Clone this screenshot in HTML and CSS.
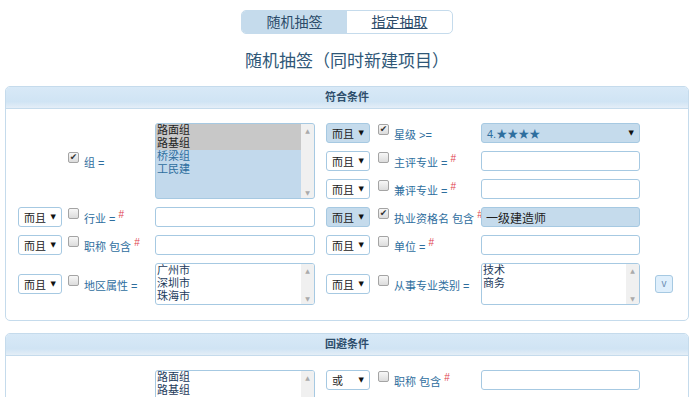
FILE: index.html
```html
<!DOCTYPE html>
<html lang="zh-CN">
<head>
    <meta charset="UTF-8">
    <title>随机抽签（同时新建项目）</title>
    <link rel="stylesheet" href="styles.css">
</head>
<body>
    <div class="tabs">
        <a class="tab active">随机抽签</a>
        <a class="tab link">指定抽取</a>
    </div>
    <h1 class="title">随机抽签（同时新建项目）</h1>

    <!-- 符合条件 -->
    <div class="panel">
        <div class="panel-head">符合条件</div>
        <div class="cond">
            <label class="chk c2 span3"><span class="cb on"></span><span class="lbl">组 =</span></label>
            <div class="listbox c3 span3 on">
                <div class="opts">
                    <div class="opt sel">路面组</div>
                    <div class="opt sel">路基组</div>
                    <div class="opt">桥梁组</div>
                    <div class="opt">工民建</div>
                </div>
                <div class="sbar"><span>▲</span><span>▼</span></div>
            </div>
            <div class="dd c4 on">而且</div>
            <label class="chk c5"><span class="cb on"></span><span class="lbl">星级 &gt;=</span></label>
            <div class="dd wide c6 on"><span class="stars">4.★★★★</span></div>

            <div class="dd c4">而且</div>
            <label class="chk c5"><span class="cb"></span><span class="lbl">主评专业 = <sup class="req">#</sup></span></label>
            <input class="txt c6" type="text">

            <div class="dd c4">而且</div>
            <label class="chk c5"><span class="cb"></span><span class="lbl">兼评专业 = <sup class="req">#</sup></span></label>
            <input class="txt c6" type="text">

            <div class="dd c1">而且</div>
            <label class="chk c2"><span class="cb"></span><span class="lbl">行业 = <sup class="req">#</sup></span></label>
            <input class="txt c3" type="text">
            <div class="dd c4 on">而且</div>
            <label class="chk c5"><span class="cb on"></span><span class="lbl">执业资格名 包含 <sup class="req">#</sup></span></label>
            <input class="txt c6 on" type="text" value="一级建造师">

            <div class="dd c1">而且</div>
            <label class="chk c2"><span class="cb"></span><span class="lbl">职称 包含 <sup class="req">#</sup></span></label>
            <input class="txt c3" type="text">
            <div class="dd c4">而且</div>
            <label class="chk c5"><span class="cb"></span><span class="lbl">单位 = <sup class="req">#</sup></span></label>
            <input class="txt c6" type="text">

            <div class="dd c1">而且</div>
            <label class="chk c2"><span class="cb"></span><span class="lbl">地区属性 =</span></label>
            <div class="listbox short c3">
                <div class="opts">
                    <div class="opt">广州市</div>
                    <div class="opt">深圳市</div>
                    <div class="opt">珠海市</div>
                </div>
                <div class="sbar"><span>▲</span><span>▼</span></div>
            </div>
            <div class="dd c4">而且</div>
            <label class="chk c5"><span class="cb"></span><span class="lbl">从事专业类别 =</span></label>
            <div class="listbox short c6">
                <div class="opts">
                    <div class="opt">技术</div>
                    <div class="opt">商务</div>
                </div>
                <div class="sbar"><span>▲</span><span>▼</span></div>
            </div>
            <button class="more c7" type="button">v</button>
        </div>
    </div>

    <!-- 回避条件 -->
    <div class="panel">
        <div class="panel-head">回避条件</div>
        <div class="cond">
            <label class="chk c2 span3"><span class="cb"></span><span class="lbl">组 =</span></label>
            <div class="listbox c3 span3">
                <div class="opts">
                    <div class="opt">路面组</div>
                    <div class="opt">路基组</div>
                    <div class="opt">桥梁组</div>
                    <div class="opt">工民建</div>
                </div>
                <div class="sbar"><span>▲</span><span>▼</span></div>
            </div>
            <div class="dd c4">或</div>
            <label class="chk c5"><span class="cb"></span><span class="lbl">职称 包含 <sup class="req">#</sup></span></label>
            <input class="txt c6" type="text">

            <div class="dd c4">或</div>
            <label class="chk c5"><span class="cb"></span><span class="lbl">单位 = <sup class="req">#</sup></span></label>
            <input class="txt c6" type="text">

            <div class="dd c4">或</div>
            <label class="chk c5"><span class="cb"></span><span class="lbl">执业资格名 包含 <sup class="req">#</sup></span></label>
            <input class="txt c6" type="text">
        </div>
    </div>
</body>
</html>
```

FILE: styles.css
```css
* {
    margin: 0;
    padding: 0;
    box-sizing: border-box;
}

body {
    font-family: "Liberation Sans", "Noto Sans CJK SC", sans-serif;
    font-size: 11px;
    color: #222;
    background: #fff;
    padding: 10px 6px 0 5px;
}

/* tabs */
.tabs {
    display: flex;
    width: 212px;
    margin: 0 auto;
    border: 1px solid #c5dbec;
    border-radius: 5px;
    overflow: hidden;
}

.tab {
    flex: 1;
    height: 22px;
    line-height: 22px;
    text-align: center;
    font-size: 14px;
    color: #2b4b69;
    cursor: pointer;
}

.tab.active {
    background: #c5dbec;
}

.tab.link {
    text-decoration: underline;
}

.title {
    font-size: 17px;
    font-weight: normal;
    line-height: 24px;
    text-align: center;
    color: #2f5777;
    margin: 16px 0 12px;
}

/* panels */
.panel {
    border: 1px solid #c5dbec;
    border-radius: 5px;
    margin-bottom: 12px;
}

.panel-head {
    height: 22px;
    line-height: 21px;
    text-align: center;
    font-weight: bold;
    font-size: 11px;
    color: #2e4e6c;
    background: linear-gradient(#d8e9f7, #d0e4f4 70%, #e4eef7);
    border-bottom: 1px solid #c5dbec;
    border-radius: 4px 4px 0 0;
}

.cond {
    display: grid;
    grid-template-columns: 48px 89px 171px 50px 105px 174px 18px;
    row-gap: 8px;
    align-items: center;
    padding: 14px 12px 15px;
}

.c1 { grid-column: 1; }
.c2 { grid-column: 2; }
.c3 { grid-column: 3; }
.c4 { grid-column: 4; }
.c5 { grid-column: 5; }
.c6 { grid-column: 6; }
.c7 { grid-column: 7; }

.span3 {
    grid-row: span 3;
}

/* dropdowns */
.dd {
    display: flex;
    align-items: center;
    width: 44px;
    height: 20px;
    padding: 0 5px 0 5px;
    border: 1px solid #a6c9e2;
    border-radius: 3px;
    background: #fff;
    font-size: 11px;
    color: #222;
}

.dd::after {
    content: "▼";
    margin-left: auto;
    font-family: "DejaVu Sans", sans-serif;
    font-size: 7px;
    color: #111;
}

.dd.on {
    background: #c5dbec;
}

.dd.wide {
    width: 159px;
}

.stars {
    color: #2e6e9e;
    font-size: 11px;
}

/* checkbox + label */
.chk {
    display: flex;
    align-items: flex-start;
    gap: 5px;
    height: 20px;
    padding-left: 2px;
    color: #2e6e9e;
    white-space: nowrap;
}

.chk.span3 {
    align-self: center;
}

.cb {
    flex: none;
    width: 11px;
    height: 11px;
    margin-top: 1px;
    border: 1px solid #a4a4a4;
    border-radius: 2px;
    background: linear-gradient(#f7f7f7, #dcdcdc);
    font-size: 9px;
    line-height: 9px;
    text-align: center;
    color: #333;
}

.cb.on::after {
    content: "✔";
    font-family: "DejaVu Sans", sans-serif;
}

.lbl {
    margin-top: 5px;
    line-height: 14px;
}

.req {
    color: #e04450;
    font-size: 10px;
    vertical-align: 5px;
    line-height: 0;
}

/* text inputs */
.txt {
    width: 160px;
    height: 20px;
    padding: 0 4px;
    border: 1px solid #a6c9e2;
    border-radius: 3px;
    background: #fff;
    font-family: inherit;
    font-size: 12px;
    color: #222;
}

.txt.c6 {
    width: 159px;
}

.txt.on {
    background: #c5dbec;
}

/* list boxes */
.listbox {
    display: flex;
    width: 160px;
    border: 1px solid #a6c9e2;
    border-radius: 3px;
    background: #fff;
    overflow: hidden;
    align-self: stretch;
}

.listbox.c6 {
    width: 159px;
}

.listbox.short {
    height: 42px;
    align-self: center;
}

.listbox.on {
    background: #c2d9ec;
}

.opts {
    flex: 1;
}

.opt {
    padding-left: 1px;
    font-size: 11px;
    line-height: 13px;
    color: #1d3b5c;
}

.listbox.on .opt {
    color: #2e6e9e;
}

.listbox.on .opt.sel {
    background: #c8c8c8;
    color: #222;
}

.sbar {
    display: flex;
    flex-direction: column;
    justify-content: space-between;
    align-items: center;
    width: 13px;
    padding: 3px 0 2px;
    background: #f0f0f0;
    font-family: "DejaVu Sans", sans-serif;
    font-size: 6px;
    color: #aaa;
}

.more {
    width: 18px;
    height: 18px;
    border: 1px solid #a6c9e2;
    border-radius: 3px;
    background: #dfeffc;
    color: #6d8fb3;
    font-family: inherit;
    font-size: 10px;
    line-height: 14px;
    cursor: pointer;
}
```
